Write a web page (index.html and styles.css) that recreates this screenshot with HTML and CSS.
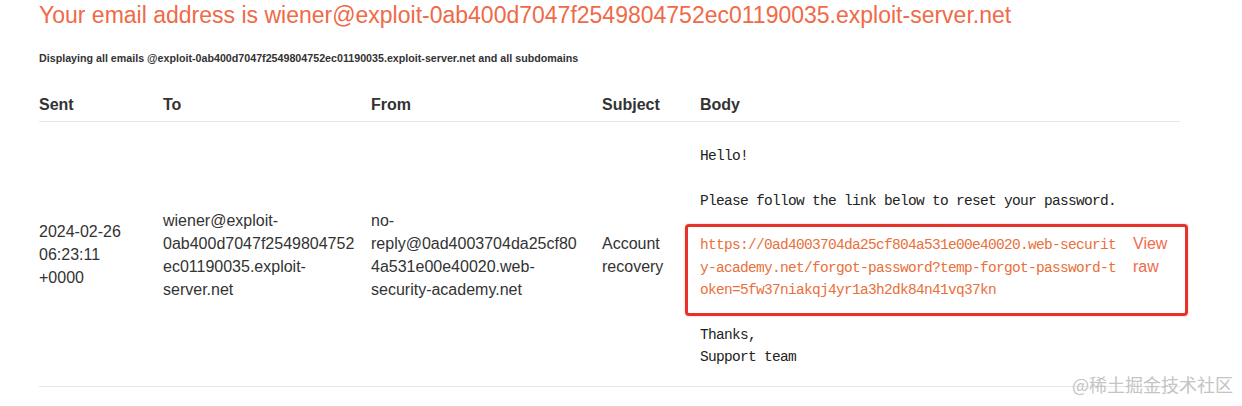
FILE: index.html
```html
<!DOCTYPE html>
<html lang="en">
<head>
<meta charset="utf-8">
<title>Email client</title>
<link rel="stylesheet" href="styles.css">
</head>
<body>
<div class="page">
  <h1 class="title">Your email address is wiener@exploit-0ab400d7047f2549804752ec01190035.exploit-server.net</h1>
  <h4 class="subtitle">Displaying all emails @exploit-0ab400d7047f2549804752ec01190035.exploit-server.net and all subdomains</h4>
  <div class="mail-table">
    <div class="th">Sent</div>
    <div class="th">To</div>
    <div class="th">From</div>
    <div class="th">Subject</div>
    <div class="th">Body</div>
    <div class="th"></div>

    <div class="td td-sent">2024-02-26 06:23:11 +0000</div>
    <div class="td td-to">wiener@exploit-0ab400d7047f2549804752ec01190035.exploit-server.net</div>
    <div class="td td-from">no-reply@0ad4003704da25cf804a531e00e40020.web-security-academy.net</div>
    <div class="td td-subject">Account recovery</div>
    <div class="td td-body"><pre class="mail-body">Hello!

Please follow the link below to reset your password.

<a class="mail-link" href="#">https://0ad4003704da25cf804a531e00e40020.web-security-academy.net/forgot-password?temp-forgot-password-token=5fw37niakqj4yr1a3h2dk84n41vq37kn</a>

Thanks,
Support team</pre></div>
    <div class="td"><a class="raw-link" href="#">View raw</a></div>
  </div>
  <div class="annot"></div>
</div>
<div class="watermark">@稀土掘金技术社区</div>
</body>
</html>
```
FILE: styles.css
```css
* { box-sizing: border-box; }

body {
  margin: 0;
  background: #fff;
  font-family: "Liberation Sans", Arial, sans-serif;
  color: #333;
}

.page {
  position: relative;
  padding: 2px 0 0 39px;
}

.title {
  margin: 0;
  font-size: 23px;
  line-height: 26px;
  font-weight: normal;
  color: #ef6a48;
  white-space: nowrap;
}

.subtitle {
  margin: 23px 0 0;
  font-size: 10.7px;
  line-height: 14px;
  font-weight: bold;
  color: #333;
}

.mail-table {
  margin-top: 20px;
  width: 1141px;
  display: grid;
  grid-template-columns: 124px 208px 231px 98px 433px 47px;
}

.th {
  padding: 8px 0 5px;
  font-size: 16px;
  line-height: 23px;
  font-weight: bold;
  color: #333;
  border-bottom: 1px solid #e6e6e6;
}

.td {
  padding: 21px 0 20px;
  font-size: 16px;
  line-height: 23px;
  color: #333;
  border-bottom: 1px solid #e6e6e6;
  display: flex;
  align-items: center;
  overflow-wrap: anywhere;
}

.td-sent { padding-right: 16px; }
.td-to { padding-right: 13px; }
.td-from { padding-right: 21px; }
.td-subject { padding-right: 13px; }
.td-body { padding: 23px 13px 18px 0; }

.mail-body {
  margin: 0;
  min-width: 0;
  font-family: "Liberation Mono", "DejaVu Sans Mono", monospace;
  font-size: 14.5px;
  letter-spacing: -0.7px;
  line-height: 22.33px;
  white-space: pre-wrap;
  word-break: break-all;
  color: #222;
}

.mail-link {
  color: #e8703a;
  text-decoration: none;
}

.raw-link {
  color: #f06b4b;
  text-decoration: none;
}

.annot {
  position: absolute;
  left: 685px;
  top: 224px;
  width: 503px;
  height: 92px;
  border: 3px solid #e5332b;
  border-radius: 4px;
  box-shadow: 0 0 2px rgba(229, 51, 43, 0.4);
}

.watermark {
  position: absolute;
  right: 9px;
  top: 373px;
  font-family: "Noto Sans CJK SC", sans-serif;
  font-size: 18px;
  line-height: 22px;
  color: #c4c4c4;
}
```
